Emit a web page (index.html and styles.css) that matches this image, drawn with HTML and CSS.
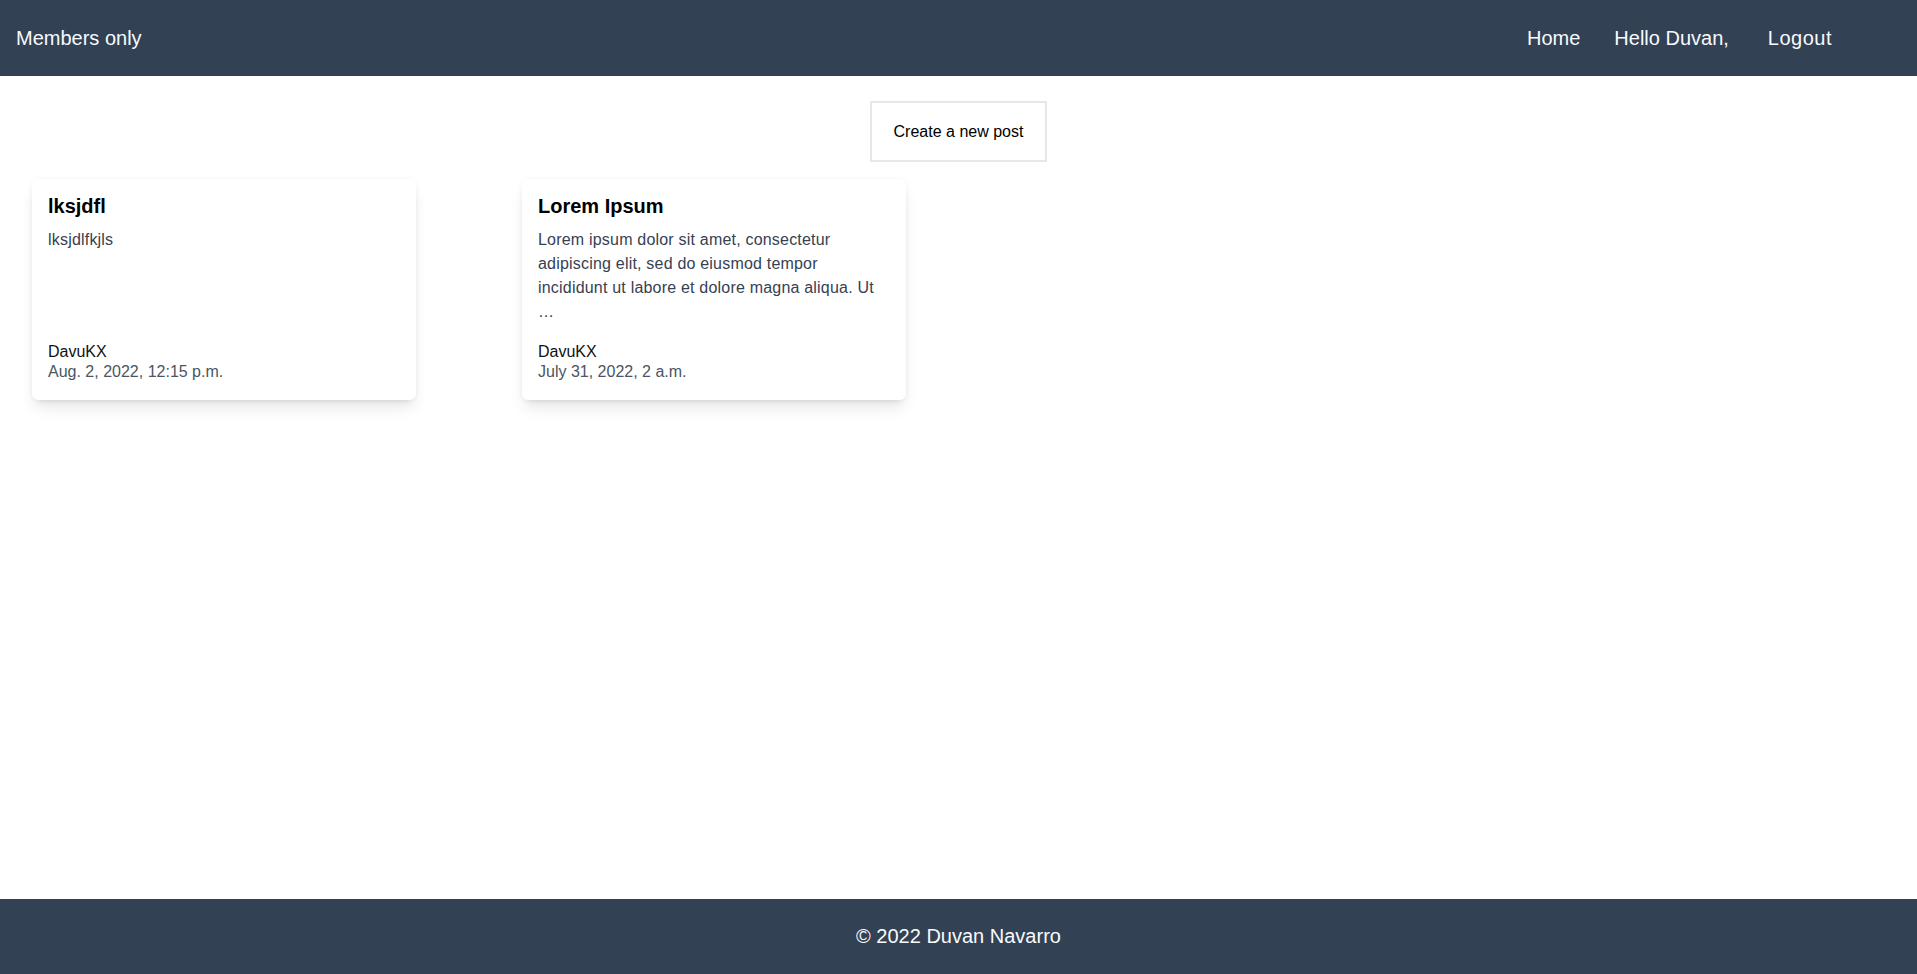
FILE: index.html
```html
<!DOCTYPE html>
<html lang="en">
<head>
<meta charset="utf-8">
<title>Members only</title>
<link rel="stylesheet" href="styles.css">
</head>
<body>
<header class="topbar">
  <a class="brand" href="#">Members only</a>
  <nav class="nav">
    <a class="nav-link" href="#">Home</a>
    <span class="nav-greeting">Hello Duvan,</span>
    <a class="nav-link nav-logout" href="#">Logout</a>
  </nav>
</header>
<main class="content">
  <div class="actions">
    <a class="btn-create" href="#">Create a new post</a>
  </div>
  <section class="posts">
    <article class="card">
      <h2 class="card-title">lksjdfl</h2>
      <p class="card-body">lksjdlfkjls</p>
      <div class="card-meta">
        <div class="card-author">DavuKX</div>
        <div class="card-date">Aug. 2, 2022, 12:15 p.m.</div>
      </div>
    </article>
    <article class="card">
      <h2 class="card-title">Lorem Ipsum</h2>
      <p class="card-body">Lorem ipsum dolor sit amet, consectetur adipiscing elit, sed do eiusmod tempor incididunt ut labore et dolore magna aliqua. Ut …</p>
      <div class="card-meta">
        <div class="card-author">DavuKX</div>
        <div class="card-date">July 31, 2022, 2 a.m.</div>
      </div>
    </article>
  </section>
</main>
<footer class="footer">© 2022 Duvan Navarro</footer>
</body>
</html>
```
FILE: styles.css
```css
* { box-sizing: border-box; }
html, body { margin: 0; padding: 0; }
body {
  font-family: "Liberation Sans", Arial, sans-serif;
  color: #111827;
  background: #ffffff;
  min-height: 100vh;
  display: flex;
  flex-direction: column;
}
a { text-decoration: none; color: inherit; }

.topbar {
  height: 76px;
  background: #334155;
  color: #f8fafc;
  display: flex;
  align-items: center;
  justify-content: space-between;
  padding: 0 85px 0 16px;
  font-size: 20px;
}
.nav {
  display: flex;
  align-items: center;
  gap: 34px;
}
.nav-logout { margin-left: 5px; letter-spacing: 0.5px; }

.content {
  flex: 1;
}
.actions {
  display: flex;
  justify-content: center;
  padding-top: 25px;
}
.btn-create {
  display: inline-block;
  border: 2px solid #e5e7eb;
  padding: 19px 22px 18px;
  font-size: 16px;
  line-height: 20px;
  color: #000;
}
.posts {
  display: flex;
  align-items: stretch;
  gap: 106px;
  padding: 17px 32px 0;
}
.card {
  width: 384px;
  display: flex;
  flex-direction: column;
  background: #fff;
  border-radius: 6px;
  padding: 13px 16px 18px;
  box-shadow: 0 10px 15px -3px rgba(0,0,0,0.1), 0 4px 6px -4px rgba(0,0,0,0.1), 0 0 6px rgba(0,0,0,0.04);
}
.card-title {
  margin: 0 0 8px;
  font-size: 20px;
  line-height: 28px;
  font-weight: 700;
  color: #000;
}
.card-body {
  margin: 0;
  flex: 1;
  max-width: 342px;
  font-size: 16px;
  line-height: 24px;
  letter-spacing: 0.2px;
  color: #374151;
}
.card-meta {
  margin-top: 18px;
  font-size: 16px;
  line-height: 20px;
}
.card-author { color: #111; }
.card-date { color: #4b5563; }

.footer {
  height: 75px;
  background: #334155;
  color: #f8fafc;
  display: flex;
  align-items: center;
  justify-content: center;
  font-size: 20px;
}
```
